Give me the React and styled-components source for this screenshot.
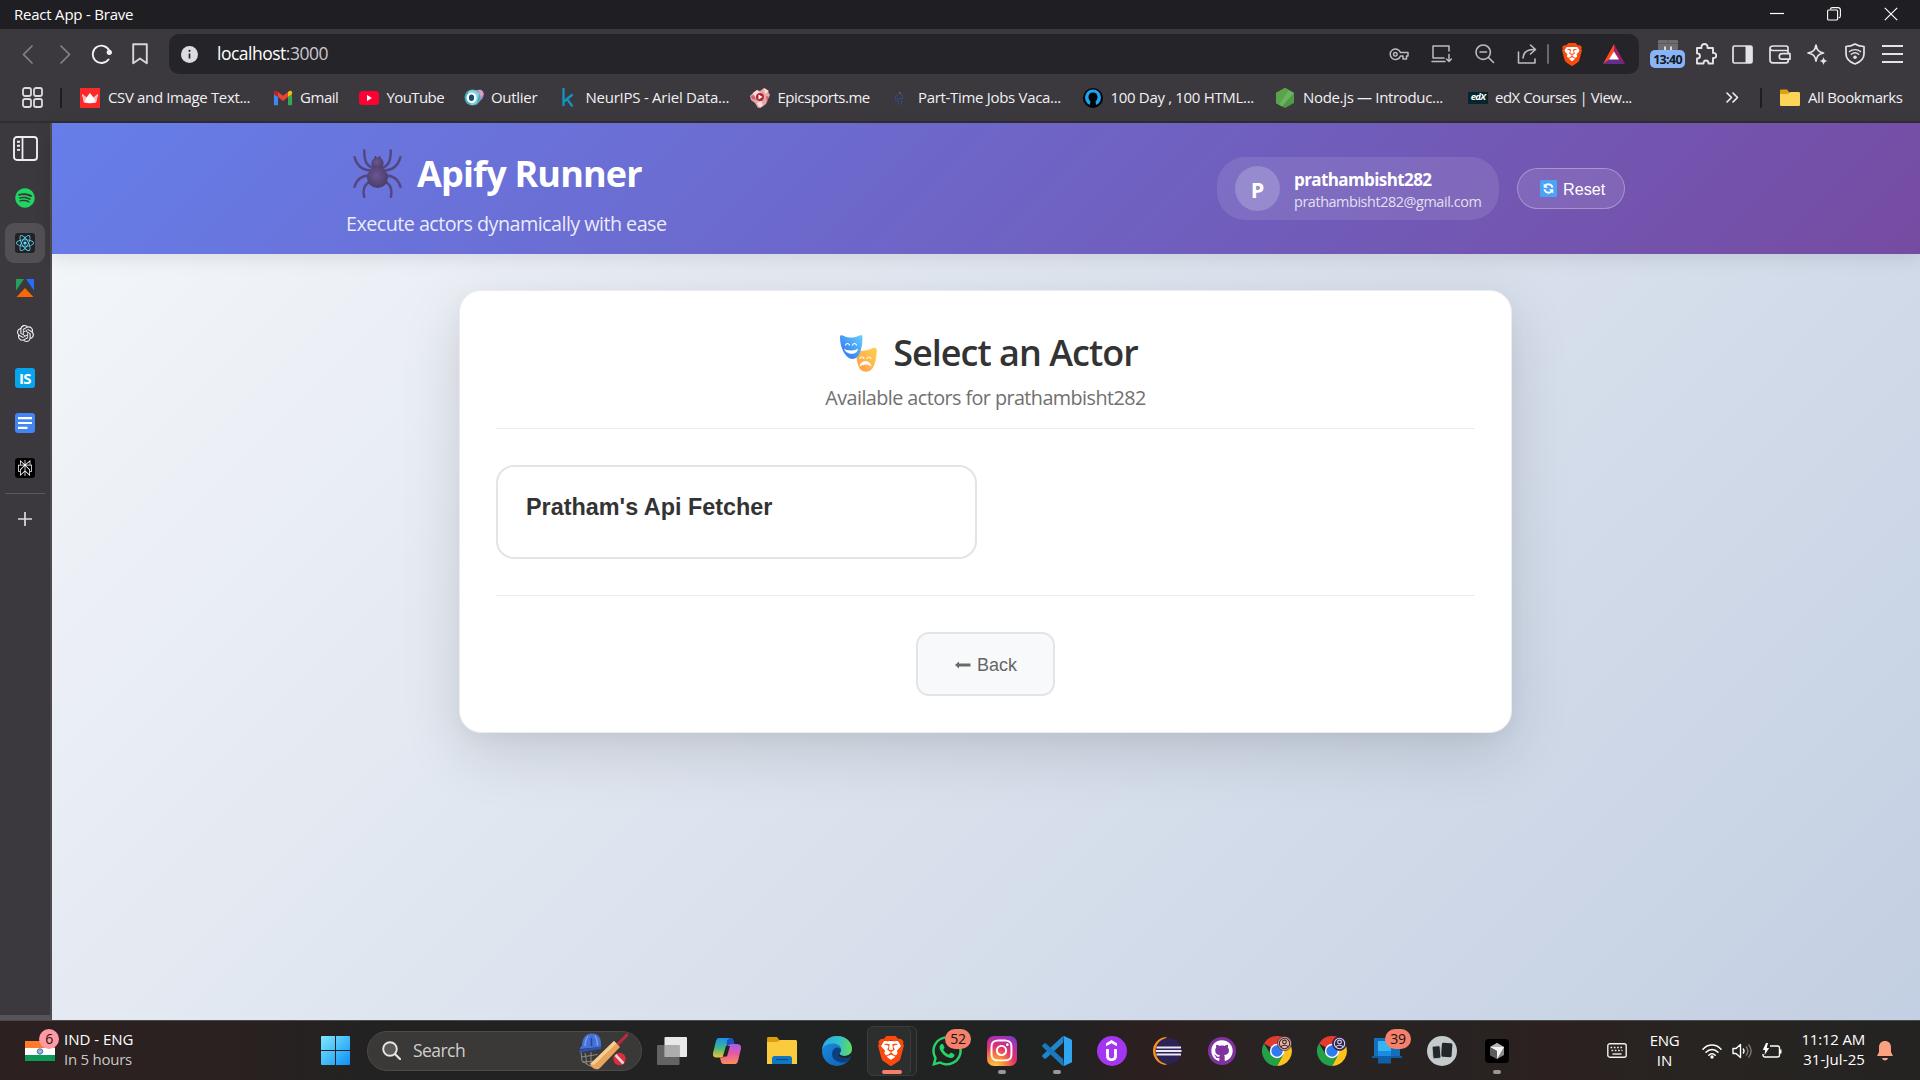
import React from "react";
import styled, { createGlobalStyle } from "styled-components";
import { SiBrave, SiOpenai, SiPerplexity, SiUdemy } from "react-icons/si";
import { FaSpotify, FaReact, FaWhatsapp, FaGithub, FaInstagram } from "react-icons/fa6";

const UI = `"Open Sans", "Noto Sans", sans-serif`;
const ARIAL = `"Liberation Sans", Arial, sans-serif`;

const Global = createGlobalStyle`
  *, *::before, *::after { box-sizing: border-box; }
  html, body { margin: 0; padding: 0; }
  body { font-family: ${UI}; overflow: hidden; background: #3b393e; }
  h1, h2, h3, p { margin: 0; }
  svg { display: block; flex: none; }
`;

/* ---------- shell ---------- */
const Screen = styled.div`
  width: 1920px;
  height: 1080px;
  display: flex;
  flex-direction: column;
  overflow: hidden;
`;
const Text = styled.span`
  font-size: ${(p) => p.$size || 15}px;
  letter-spacing: ${(p) => p.$track || 0}px;
  line-height: ${(p) => p.$line || 20}px;
  font-weight: ${(p) => p.$weight || 400};
  color: ${(p) => p.$color || "#fff"};
  white-space: nowrap;
`;
const TitleBar = styled.header`
  height: 29px;
  flex: none;
  background: #1f1e22;
  display: flex;
  align-items: center;
  justify-content: space-between;
  padding: 0 22px 1px 14px;
`;
const WindowButtons = styled.div`
  display: flex;
  gap: 43px;
  align-items: center;
`;
const Toolbar = styled.div`
  height: 51px;
  flex: none;
  background: #3b393e;
  display: flex;
  align-items: center;
  padding: 0 8px 1px 8px;
`;
const Cell = styled.div`
  width: ${(p) => p.$w || 37.3}px;
  height: 40px;
  flex: none;
  display: flex;
  align-items: center;
  justify-content: center;
  color: #d8d6dc;
`;
const AddressBar = styled.div`
  width: 1470px;
  height: 40px;
  margin-left: 4px;
  margin-right: 11px;
  padding: 0 6px 0 12px;
  border-radius: 10px;
  background: #252429;
  display: flex;
  align-items: center;
`;
const Url = styled.div`
  flex: 1;
  padding-left: 19px;
  padding-bottom: 2px;
`;
const BarDivider = styled.i`
  width: 2px;
  height: ${(p) => p.$h || 20}px;
  background: ${(p) => p.$color || "#6b696f"};
  border-radius: 1px;
  flex: none;
`;
const TimerExtension = styled.div`
  width: 35px;
  height: 28px;
  margin-right: 2px;
  flex: none;
  display: flex;
  flex-direction: column;
  align-items: center;
`;
const TimerBadge = styled.span`
  width: 35px;
  height: 18px;
  border-radius: 5px;
  background: #8ab4f8;
  color: #16181d;
  font-size: 12.5px;
  font-weight: 700;
  letter-spacing: -0.7px;
  line-height: 19px;
  text-align: center;
`;
const BookmarksBar = styled.nav`
  height: 43px;
  flex: none;
  background: #3b393e;
  border-bottom: 2px solid #302e32;
  display: flex;
  align-items: center;
  padding: 0 17px 6px 0;
`;
const AppsButton = styled.div`
  width: 60px;
  padding-left: 22px;
`;
const BookmarkList = styled.div`
  display: flex;
  margin-left: 18px;
  flex: 1;
`;
const Bookmark = styled.div`
  width: ${(p) => p.$w}px;
  flex: none;
  display: flex;
  align-items: center;
  gap: ${(p) => p.$gap || 8}px;
  & > ${Text} { padding-bottom: 2px; }
`;
const Body = styled.div`
  flex: 1;
  min-height: 0;
  display: flex;
`;

/* ---------- sidebar ---------- */
const Sidebar = styled.aside`
  width: 52px;
  flex: none;
  background: #3b393e;
  border-right: 2px solid #4d4b50;
  border-bottom: 5px solid #565459;
  display: flex;
  flex-direction: column;
  align-items: center;
  padding: 5px 0 0 0;
  gap: 5px;
`;
const SideItem = styled.div`
  width: 40px;
  height: 40px;
  flex: none;
  border-radius: 9px;
  background: ${(p) => (p.$active ? "#525055" : "transparent")};
  display: flex;
  align-items: center;
  justify-content: center;
  &:first-child { margin-bottom: 5px; }
`;
const SideTile = styled.div`
  width: 20px;
  height: 20px;
  border-radius: 3px;
  background: ${(p) => p.$bg};
  color: ${(p) => p.$fg || "#fff"};
  display: flex;
  align-items: center;
  justify-content: center;
  font-size: 15px;
  font-weight: 700;
  letter-spacing: -0.6px;
  line-height: 20px;
`;
const SideRule = styled.hr`
  width: 40px;
  height: 1px;
  margin: 0;
  border: 0;
  background: #5b595e;
`;

/* ---------- page ---------- */
const Page = styled.main`
  flex: 1;
  min-width: 0;
  display: flex;
  flex-direction: column;
  align-items: center;
  background: linear-gradient(135deg, #f5f7fa 0%, #c3cfe2 100%);
`;
const PageHeader = styled.header`
  width: 100%;
  height: 131px;
  flex: none;
  display: flex;
  justify-content: center;
  background: linear-gradient(135deg, #667eea 0%, #764ba2 100%);
  box-shadow: 0 4px 18px rgba(0, 0, 0, 0.1);
`;
const HeaderInner = styled.div`
  width: 1279px;
  margin-right: 1px;
  display: flex;
  align-items: center;
  justify-content: space-between;
`;
const Brand = styled.div`
  display: flex;
  flex-direction: column;
  gap: 5px;
  padding-top: 7px;
`;
const BrandTitle = styled.h1`
  display: flex;
  align-items: center;
  gap: 15px;
  padding-left: 7px;
  font-size: 36px;
  line-height: 59px;
  font-weight: 700;
  letter-spacing: -0.83px;
  color: #fff;
`;
const Tagline = styled.p`
  font-size: 19.8px;
  line-height: 32px;
  letter-spacing: -0.56px;
  color: rgba(255, 255, 255, 0.88);
`;
const Account = styled.div`
  display: flex;
  align-items: center;
  gap: 18px;
`;
const UserPill = styled.div`
  width: 282px;
  height: 63px;
  padding: 0 18px;
  border-radius: 28px;
  background: rgba(255, 255, 255, 0.1);
  display: flex;
  align-items: center;
  gap: 14px;
`;
const Avatar = styled.div`
  width: 45px;
  height: 45px;
  flex: none;
  border-radius: 50%;
  background: rgba(255, 255, 255, 0.2);
  color: #fff;
  font-size: 21.6px;
  font-weight: 700;
  line-height: 45px;
  padding-top: 1px;
  text-align: center;
`;
const UserText = styled.div`
  display: flex;
  flex-direction: column;
  padding-top: 3px;
`;
const ResetButton = styled.button`
  width: 108px;
  height: 41px;
  padding: 0 0 0 22px;
  border: 1px solid rgba(255, 255, 255, 0.3);
  border-radius: 21px;
  background: rgba(255, 255, 255, 0.1);
  color: #fff;
  font: 400 16.2px/20px ${ARIAL};
  display: flex;
  align-items: center;
  gap: 6px;
`;
const Card = styled.section`
  width: 1053px;
  height: 443px;
  margin: 36px 1px 0 0;
  padding: 35px 36px 35px 36px;
  background: #fff;
  border: 1px solid #ececee;
  border-radius: 22px;
  box-shadow: 0 20px 60px rgba(0, 0, 0, 0.13), 0 6px 18px rgba(0, 0, 0, 0.03);
  display: flex;
  flex-direction: column;
`;
const CardHead = styled.div`
  height: 103px;
  flex: none;
  border-bottom: 1px solid #ebecee;
  display: flex;
  flex-direction: column;
  align-items: center;
  padding-top: 1px;
`;
const CardTitle = styled.h2`
  display: flex;
  align-items: center;
  gap: 16px;
  padding-left: 7px;
  font-size: 36px;
  line-height: 52px;
  font-weight: 600;
  letter-spacing: -0.98px;
  color: #333;
`;
const CardSub = styled.p`
  margin-top: 3px;
  font-size: 19.8px;
  line-height: 32px;
  letter-spacing: -0.57px;
  color: #707070;
`;
const ActorGrid = styled.div`
  display: grid;
  grid-template-columns: 481px 481px;
  gap: 18px;
  padding: 36px 0;
  border-bottom: 1px solid #ebecee;
`;
const ActorCard = styled.button`
  height: 94px;
  padding: 0 27px 10px 28px;
  border: 2px solid #e1e5ea;
  border-radius: 18px;
  background: #fff;
  color: #333;
  font: 700 23.4px/30px ${ARIAL};
  text-align: left;
`;
const CardFoot = styled.div`
  display: flex;
  justify-content: center;
  padding-top: 36px;
`;
const BackButton = styled.button`
  width: 139px;
  height: 64px;
  padding: 2px 0 0 1px;
  border: 2px solid #e1e5ea;
  border-radius: 13px;
  background: #f8f9fb;
  color: #666;
  font: 400 18px/24px ${ARIAL};
  display: flex;
  align-items: center;
  justify-content: center;
  gap: 6px;
`;

/* ---------- taskbar ---------- */
const Taskbar = styled.footer`
  height: 60px;
  flex: none;
  border-top: 1px solid #4a4b4c;
  background: linear-gradient(90deg, #2c2120 0%, #2a2120 12%, #222222 20%, #212222 55%, #2c201f 60%, #282423 66%, #282322 76%, #2c2120 81%, #272421 88%, #252322 100%);
  display: flex;
  align-items: center;
`;
const Widget = styled.div`
  width: 307px;
  padding-left: 25px;
  display: flex;
  align-items: center;
  gap: 9px;
`;
const FlagWrap = styled.div`
  position: relative;
  width: 30px;
  height: 20px;
`;
const Lines = styled.div`
  display: flex;
  flex-direction: column;
  align-items: ${(p) => p.$align || "flex-start"};
  width: ${(p) => (p.$w ? p.$w + "px" : "auto")};
  padding-bottom: ${(p) => p.$lift || 4}px;
`;
const Badge = styled.span`
  position: absolute;
  top: ${(p) => p.$top}px;
  left: ${(p) => p.$left}px;
  width: ${(p) => p.$w}px;
  height: 20px;
  border-radius: 10px;
  background: ${(p) => p.$bg};
  color: #1b1412;
  font-size: 14px;
  line-height: 19px;
  letter-spacing: -0.3px;
  text-align: center;
`;
const StartButton = styled.div`
  width: 60px;
  padding-left: 14px;
`;
const SearchBox = styled.div`
  width: 275px;
  height: 40px;
  border-radius: 20px;
  border: 1px solid #4c4b4a;
  background: #3a3938;
  display: flex;
  align-items: center;
  padding: 0 13px 0 14px;
  gap: 12px;
  margin-right: 2px;
`;
const SearchLabel = styled.div`
  flex: 1;
`;
const TaskCell = styled.div`
  position: relative;
  width: 55px;
  height: 59px;
  flex: none;
  display: flex;
  align-items: center;
  justify-content: center;
`;
const ActiveFrame = styled.div`
  width: 50px;
  height: 50px;
  padding-right: 1px;
  border-radius: 6px;
  background: #2d2e2e;
  border: 1px solid #3a3b3b;
  box-shadow: inset -5px 0 0 #262727, inset -6px 0 0 #3a3b3b;
  display: flex;
  align-items: center;
  justify-content: center;
`;
const RunningMark = styled.i`
  position: absolute;
  bottom: 6px;
  left: 50%;
  width: ${(p) => (p.$active ? 20 : 8)}px;
  height: 4px;
  margin-left: ${(p) => (p.$active ? -10 : -4)}px;
  border-radius: 2px;
  background: ${(p) => (p.$active ? "#f4806a" : "#9a9797")};
`;
const Disc = styled.div`
  width: ${(p) => p.$s}px;
  height: ${(p) => p.$s}px;
  border-radius: ${(p) => p.$r || "50%"};
  background: ${(p) => p.$bg};
  color: #fff;
  display: flex;
  align-items: center;
  justify-content: center;
`;
const Tray = styled.div`
  margin-left: auto;
  display: flex;
  align-items: center;
  padding-right: 27px;
`;
const TrayIcons = styled.div`
  display: flex;
  gap: 10px;
  margin-right: 11px;
`;

/* ---------- drawings ---------- */
const Svg = ({ w, h = w, vb, children, ...rest }) => (
  <svg width={w} height={h} viewBox={vb || `0 0 ${w} ${h}`} fill="none" {...rest}>
    {children}
  </svg>
);
const line = { stroke: "currentColor", strokeWidth: 1.7, strokeLinecap: "round", strokeLinejoin: "round" };

const BraveLion = ({ w, h }) => (
  <Svg w={w} h={h} vb="1.7 0 20.6 24" preserveAspectRatio="none">
    <path d="M6 4h12l2 4-3 10-5 4-5-4L4 8z" fill="#fff" />
    <SiBrave size={24} color="#fb4a0b" x="0" y="0" />
  </Svg>
);

const Spider = () => (
  <Svg w={49} h={49} vb="0 0 48 48">
    <defs>
      <radialGradient id="spiderBody" cx=".45" cy=".4" r=".65">
        <stop offset="0" stopColor="#6a5790" />
        <stop offset="1" stopColor="#463a66" />
      </radialGradient>
    </defs>
    <g stroke="#544780" strokeWidth="2.4" strokeLinecap="round">
      <path d="M20 19C13 16 11 12 11 1.500" />
      <path d="M28 19c7-3 9-7 9-17.500" />
      <path d="M18 21C9 21 4 17 1.500 8" />
      <path d="M30 21c9 0 14-4 16.500-13" />
      <path d="M16 26C9 26 4 29 1.500 37" />
      <path d="M32 26c7 0 12 3 14.500 11" />
      <path d="M17 32c-5 2-8 6-6 15" />
      <path d="M31 32c5 2 8 6 6 15" />
    </g>
    <path d="M22 10V7M26 10V7" stroke="#43365f" strokeWidth="1.600" />
    <circle cx="24" cy="14" r="6" fill="url(#spiderBody)" />
    <circle cx="24" cy="28" r="10.300" fill="url(#spiderBody)" />
  </Svg>
);

const Masks = () => (
  <Svg w={37} h={37} vb="0 0 37 37">
    <defs>
      <linearGradient id="happy" x1="0" y1="1" x2="1" y2="0">
        <stop offset="0.3" stopColor="#3a86f5" />
        <stop offset="1" stopColor="#67d2fb" />
      </linearGradient>
      <linearGradient id="sad" x1="0" y1="1" x2="1" y2="0">
        <stop offset="0" stopColor="#ff9a4d" />
        <stop offset="1" stopColor="#ffd24c" />
      </linearGradient>
    </defs>
    <path d="M16 14c3 2 5 2 9 1.500 4-.4 6-1.500 8-2.500 2-.6 4 .2 3.800 2.500C36.300 24 35 30 32 34c-3 3.500-9 3.500-12 0-3-5-4-12-4-20z" fill="url(#sad)" />
    <path d="M0 1.500C0 0 2 0 4 1c4 2 10 2 14 0 2-1 4.500-1 4.500.8C22.500 10 21 17 18 21c-3 4-8 4-11.500 0C2 16 0 9 0 1.500z" fill="url(#happy)" />
    <path d="M4 13.500c2 2.500 12 2.500 14 0 0 7-12 7-14 0z" fill="#fff" />
    <path d="M5.500 10c1-2 3-2 4 0M12.500 10c1-2 3-2 4 0M20 23.500c1-2 3-2 4 0M27 23.500c1-2 3-2 4 0" stroke="#fff" strokeWidth="1.200" strokeLinecap="round" />
    <path d="M19.500 31.500c1-7 11-7 12 0-4-2.700-8-2.700-12 0z" fill="#fff" />
  </Svg>
);

const ResetGlyph = () => (
  <Svg w={17} h={17}>
    <rect width="17" height="17" rx="1.500" fill="#4ba3f7" />
    <path d="M12.500 7.600A4.200 4.200 0 0 0 5 6M4.500 9.400A4.200 4.200 0 0 0 12 11" stroke="#fff" strokeWidth="1.900" />
    <path d="M3.700 3.500v4.300H8zM13.300 13.500V9.200H9z" fill="#fff" />
  </Svg>
);

const GmailLogo = () => (
  <Svg w={20} h={16} vb="-1 0 22 16">
    <path d="M1 16h3.500V7L0 3.500V15a1 1 0 0 0 1 1z" fill="#4285f4" />
    <path d="M15.500 16H19a1 1 0 0 0 1-1V3.500L15.500 7z" fill="#34a853" />
    <path d="M15.500 7L20 3.500V2c0-2-2-2.600-3.400-1.500L15.500 1.400z" fill="#fbbc04" />
    <path d="M4.500 7V1.400L10 5.500l5.500-4.100V7L10 11.200z" fill="#ea4335" />
    <path d="M0 2v1.500L4.500 7V1.400L3.400.5C2-.6 0 0 0 2z" fill="#c5221f" />
  </Svg>
);

const Chrome = ({ ring, ink }) => (
  <Svg w={30} h={30} vb="-15 -15 30 30">
    <path d="M0 0L-13-7.500A15 15 0 0 1 13-7.500z" fill="#e33b2e" />
    <path d="M0-7.200H13.100A15 15 0 0 1 0 15L6.200 3.600z" fill="#fcc31f" />
    <path d="M-6.200 3.600L-13-7.500A15 15 0 0 0 0 15L6.200 3.600z" fill="#24a148" />
    <circle r="7.200" fill="#fff" />
    <circle r="5.700" fill="#2f7af0" />
    <circle cx="7.500" cy="-7.500" r="7" fill={ring} stroke="#2b2342" strokeWidth=".8" />
    <circle cx="7.500" cy="-7.500" r="5.200" stroke={ink} strokeWidth="1.100" />
    <circle cx="7.500" cy="-9" r="1.900" stroke={ink} strokeWidth="1.100" />
    <path d="M4-4.300c1.500-2 5.500-2 7 0" stroke={ink} strokeWidth="1.100" />
  </Svg>
);

const Edge = () => (
  <Svg w={30} h={30}>
    <defs>
      <linearGradient id="edgeTop" x1="0" y1=".4" x2="1" y2=".5">
        <stop offset="0" stopColor="#2aa7e6" />
        <stop offset=".55" stopColor="#35c1c9" />
        <stop offset="1" stopColor="#62dc56" />
      </linearGradient>
      <linearGradient id="edgeLow" x1="0" y1="0" x2=".8" y2="1">
        <stop offset="0" stopColor="#1d8fe0" />
        <stop offset="1" stopColor="#0f63b8" />
      </linearGradient>
    </defs>
    <circle cx="15" cy="15" r="15" fill="url(#edgeLow)" />
    <path d="M0 14C1 5 7 0 15 0c9 0 15 6 15 12.500 0 4.500-3.500 7.500-7.500 7.500-3.500 0-5-1.200-5-2.300 0-.8 1.700-1.500 1.700-4.200C19 10 15.500 7.500 11 7.500 5 7.500 1 10.500 0 14z" fill="url(#edgeTop)" />
    <path d="M10 18c0-3.500 2-5.500 4-6.500 3-.5 5 1 5 3 0 1.500-1.500 2-1.500 3.300 0 1.200 2 2.200 5 2.200 2.300 0 4-.7 5.500-1.700V23l-5 3.500C16 27 10 24 10 18z" fill="#0b3f80" />
    <path d="M17.500 17.600c0 1.400 2 2.600 5.200 2.600 3 0 5.600-1.600 7.300-4.200v4.500l-2.500.5c-3 1.600-9.500 1.300-11-2z" fill="#212222" />
  </Svg>
);

const Copilot = () => (
  <Svg w={28} h={26} vb="0 0 28 26">
    <defs>
      <linearGradient id="cpA" x1="0" y1="0" x2="0" y2="1">
        <stop offset="0" stopColor="#1f8df0" />
        <stop offset=".5" stopColor="#3db88a" />
        <stop offset="1" stopColor="#f2c12e" />
      </linearGradient>
      <linearGradient id="cpB" x1="0" y1="0" x2="0" y2="1">
        <stop offset="0" stopColor="#a35cf0" />
        <stop offset=".5" stopColor="#ea5aa0" />
        <stop offset="1" stopColor="#fb8f5a" />
      </linearGradient>
    </defs>
    <path d="M6 0h11c2 0 3 1 3.500 3l.8 3H17c-2 0-3 1-3.500 3l-2 7.500c-.5 2-1.500 3-3.500 3H3c-2.500 0-3.500-2-3-4.500L3 3C3.500 1 4.500 0 6 0z" fill="url(#cpA)" />
    <path d="M17 0c2 0 3 1 3.500 3l.8 3H17c-2 0-3 1-3.500 3L14 2z" fill="#1c50c8" />
    <path d="M22 26H11c-2 0-2.800-1-3.200-3L7 19.500h2c2 0 3-1 3.500-3l2-7.500c.5-2 1.500-3 3.500-3h6c3 0 4.500 2 4 4.500L25 23c-.5 2-1.500 3-3 3z" fill="url(#cpB)" />
    <path d="M13 8h4l-3 10.500H9.800z" fill="#222" />
  </Svg>
);

const VsCode = () => (
  <Svg w={30} h={30}>
    <path d="M22 0l-1 7L4 22.500c-.6.500-1.300.5-1.800 0L.6 21c-.6-.6-.6-1.400 0-2L20 .8z" fill="#2086cc" />
    <path d="M22 30l-1-7L4 7.500c-.6-.5-1.300-.5-1.800 0L.6 9c-.6.600-.6 1.400 0 2L20 29.200z" fill="#1a78c0" />
    <path d="M22 0l7 3.200c.6.300 1 .9 1 1.600v20.400c0 .7-.4 1.300-1 1.600L22 30V0z" fill="#30a6f2" />
  </Svg>
);

const Cricket = () => (
  <Svg w={50} h={38}>
    <path d="M3 20l1 9 8 5 8-1M3.500 25l16-2.500M7 21l2 11.500M13 20v14M4 30l16-1" stroke="#8d8b8a" strokeWidth="1" />
    <path d="M2 17c0-2 1-2 2-3C4 6 8 1.500 14 1.500c6 0 9 4 9 10.500v3z" fill="#4672d8" />
    <path d="M10 4c-2 3-3 6-3 10M17 3.500c2 3 2.500 6 2.500 10" stroke="#7ea2f2" strokeWidth="1.300" />
    <path d="M13.500 6v8" stroke="#2444a0" strokeWidth="1.500" />
    <path d="M1 18l22-3.500v2.500L1.500 20.500z" fill="#2c50b4" />
    <path d="M38 14l11-11" stroke="#c2293c" strokeWidth="3" strokeLinecap="round" />
    <path d="M36 9l6 6-20 21c-3 3-8 0-10-3z" fill="#e7a55e" />
    <path d="M36 9l2.500 2.500L16 33l-4-1z" fill="#f6cd92" />
    <circle cx="41.500" cy="27" r="6.200" fill="#d8303f" />
    <path d="M37.500 23l8 8.500" stroke="#f4d3d3" strokeWidth="2.600" />
  </Svg>
);

const Extras = {
  csv: (
    <Svg w={20} h={20}>
      <rect width="20" height="20" fill="#fb2929" />
      <path d="M2 6l4.500 3.500L10 5l3.500 4.500L18 6l-2 8.500c-4 1-8 1-12 0z" fill="#fff" />
      <path d="M2 6l4.500 3.500L4 14.500zM18 6l-4.500 3.500 2.500 5z" fill="#ffb9b5" />
    </Svg>
  ),
  youtube: (
    <Svg w={20} h={14}>
      <rect width="20" height="14" rx="3.500" fill="#ff0033" />
      <path d="M8 4v6l5-3z" fill="#fff" />
    </Svg>
  ),
  outlier: (
    <Svg w={20} h={17}>
      <path d="M11 1h6c3 2 3.500 6 1 9l-6 6z" fill="#9d8fd0" />
      <path d="M14 1c3-1 6 1 5.500 5L16 8z" fill="#d79bc4" />
      <circle cx="8.500" cy="8.500" r="8" fill="#48aeb9" />
      <path d="M4 3c3-3 9-2 11 2l-2 8c-1 2-4 3.500-6 3z" fill="#8bd3dc" />
      <ellipse cx="7.500" cy="8.700" rx="5" ry="5.300" fill="#fff" />
      <ellipse cx="7.500" cy="8.700" rx="2.600" ry="3.200" fill="#174f6b" />
    </Svg>
  ),
  kaggle: (
    <Svg w={12} h={19}>
      <path d="M1.500 0v18M10.500 6.500L2 13.500M5 11l5.500 7.500" stroke="#1593bf" strokeWidth="2.300" />
    </Svg>
  ),
  epic: (
    <Svg w={20} h={20}>
      <path d="M3 5l4-3 3 1 4-3 3 2 3 5-2 4-2 5-4 3-4 1-3-5-4-3-1-4z" fill="#e8a7a9" />
      <path d="M3 5l4-3 3 3-5 4zM14 0l5 3-4 3zM7 15l4-2 2 4-3 3z" fill="#f7dedb" />
      <path d="M1 8l3-1 2 5-4-1zM16 8l3 1-2 5z" fill="#cf5f6c" />
      <circle cx="10" cy="9" r="4" fill="#b02635" />
      <path d="M8.500 6.500v5L12.500 9z" fill="#fff" />
    </Svg>
  ),
  jobs: (
    <Svg w={11} h={14} vb="-1 -1 13 17">
      <path d="M3 4C0 5 0 9 2 11M3 8h7M7 3.500h2V8M4 10v5M8 10v5" stroke="#2b4c8f" strokeWidth="1.300" />
      <circle cx="6" cy="1.500" r="1.500" fill="#7a5242" />
    </Svg>
  ),
  hundred: (
    <Svg w={20} h={20}>
      <circle cx="10" cy="10" r="10" fill="#050505" />
      <circle cx="10" cy="9.500" r="8" fill="#19a6f5" />
      <path d="M10 4.500c3 0 4.500 2 4.500 4.500 0 2-1 3.500-2 4.500l1 5c-2 1.500-5 1.500-7 0l1-5c-1-1-2-2.500-2-4.500 0-2.500 1.500-4.500 4.500-4.500z" fill="#050505" />
    </Svg>
  ),
  node: (
    <Svg w={18} h={20}>
      <path d="M9 0l9 5v10l-9 5-9-5V5z" fill="#4f9a45" />
      <path d="M9 0l9 5-12 13.500L0 15V5z" fill="#6bb35e" />
      <path d="M9 0l4 2L3 16.500 0 15V5z" fill="#58a34c" />
    </Svg>
  ),
};

const EdxTile = styled.span`
  width: 20px;
  height: 12px;
  background: #06262c;
  color: #fff;
  font: italic 700 9.5px/10px ${UI};
  letter-spacing: -0.7px;
  text-align: center;
`;

const bookmarks = [
  { w: 193, icon: Extras.csv, label: "CSV and Image Text...", track: -0.36 },
  { w: 86, icon: <GmailLogo />, label: "Gmail", track: -0.45, gap: 7 },
  { w: 105, icon: Extras.youtube, label: "YouTube", track: -0.6, gap: 7.5 },
  { w: 98, icon: Extras.outlier, label: "Outlier", track: -0.3, gap: 7 },
  { w: 188, icon: Extras.kaggle, label: "NeurIPS - Ariel Data...", track: -0.25, gap: 11.5 },
  { w: 144, icon: Extras.epic, label: "Epicsports.me", track: -0.5, gap: 7.5 },
  { w: 189, icon: Extras.jobs, label: "Part-Time Jobs Vaca...", track: -0.31, gap: 13 },
  { w: 193, icon: Extras.hundred, label: "100 Day , 100 HTML...", track: -0.32, gap: 7.5 },
  { w: 192, icon: Extras.node, label: "Node.js — Introduc...", track: -0.33, gap: 9 },
  { w: 200, icon: <EdxTile>edX</EdxTile>, label: "edX Courses | View...", track: -0.5, gap: 7 },
];

const taskItems = [
  {
    key: "taskview",
    icon: (
      <Svg w={30} h={28}>
        <rect x="7.500" width="22.500" height="20" rx="1" fill="#e9e9e9" />
        <rect y="8" width="22.500" height="20" rx="1" fill="#6f6f6f" fillOpacity=".85" />
        <rect x="7.500" y="8" width="15" height="12" fill="#adadad" />
      </Svg>
    ),
  },
  { key: "copilot", icon: <Copilot /> },
  {
    key: "files",
    icon: (
      <Svg w={30} h={27}>
        <path d="M0 1.500C0 .7.600 0 1.500 0H10l3 4v5H0z" fill="#dd9c0b" />
        <path d="M0 5h10l3-2h15.500c.8 0 1.500.700 1.500 1.500V27H0z" fill="#fbcb3e" />
        <path d="M5 27v-5.500C5 20 6 19 7.500 19h15c1.500 0 2.500 1 2.500 2.500V27z" fill="#1077c4" />
        <path d="M9 22.500h12" stroke="#0a4c86" strokeWidth="1.200" />
      </Svg>
    ),
  },
  { key: "edge", icon: <Edge /> },
  { key: "brave", icon: <BraveLion w={26} h={30} />, active: true },
  { key: "whatsapp", icon: <FaWhatsapp size={34} color="#25d366" />, badge: "52" },
  {
    key: "instagram",
    icon: (
      <Disc $s={30} $r="7px" $bg="radial-gradient(circle at 25% 105%, #fdd24b 0%, #fb8a35 28%, #e0306f 55%, #b52fa8 75%, #6a3fd0 100%)">
        <FaInstagram size={25} />
      </Disc>
    ),
    running: true,
  },
  { key: "vscode", icon: <VsCode />, running: true },
  {
    key: "udemy",
    icon: (
      <Disc $s={30} $bg="#a435f0">
        <SiUdemy size={21} />
      </Disc>
    ),
  },
  {
    key: "eclipse",
    icon: (
      <Svg w={30} h={28}>
        <path d="M15 0A14 14 0 0 0 15 28 18 18 0 0 1 15 0z" fill="#f7941e" />
        <circle cx="16.500" cy="14" r="13" fill="#2c2255" />
        <path d="M4.500 10.500h24.500M4 14h25.500M4.500 17.500h24.500" stroke="#e9e7f2" strokeWidth="2.200" />
      </Svg>
    ),
  },
  {
    key: "github",
    icon: (
      <Disc $s={28} $bg="#8032a0">
        <FaGithub size={22} />
      </Disc>
    ),
  },
  { key: "chrome1", icon: <Chrome ring="#e9b3a6" ink="#3b2a2a" /> },
  { key: "chrome2", icon: <Chrome ring="#2e2547" ink="#d9cfee" /> },
  {
    key: "phone",
    icon: (
      <Svg w={30} h={27}>
        <path d="M2 1h26v18H2z" fill="#1470bd" />
        <path d="M0 19h30v2H0z" fill="#0f5c9e" />
        <path d="M6 4h13v17H6z" fill="#35b5f2" />
        <path d="M6 14h13v5H6z" fill="#1d8ce0" />
        <path d="M6 19h13v7.500H6z" fill="#0f5fa8" />
      </Svg>
    ),
    badge: "39",
  },
  {
    key: "devices",
    icon: (
      <Svg w={30} h={30}>
        <circle cx="15" cy="15" r="15" fill="#c5cacd" />
        <rect x="14.500" y="7" width="10.500" height="14" rx="1.500" transform="rotate(4 20 14)" fill="#24272a" />
        <rect x="5.500" y="10" width="8" height="12.500" rx="1.500" transform="rotate(-5 9 16)" fill="#24272a" stroke="#c5cacd" strokeWidth=".8" />
      </Svg>
    ),
  },
  {
    key: "cursor",
    icon: (
      <Svg w={24} h={24}>
        <rect width="24" height="24" rx="4" fill="#000" />
        <path d="M12 4l7 4v8l-7 4-7-4V8z" fill="#8b8b8b" />
        <path d="M5 8h14l-7 12v-8z" fill="#f2f2f2" />
        <path d="M5 8l7 4v8l-7-4z" fill="#5c5c5c" />
        <path d="M5 8l7-4 7 4z" fill="#b5b5b5" />
      </Svg>
    ),
    running: true,
  },
];

function BrowserChrome() {
  return (
    <>
      <TitleBar>
        <Text $size={15} $track={-0.22}>React App - Brave</Text>
        <WindowButtons>
          <Svg w={14} h={14}><path d="M0 6.500h14" stroke="#fff" strokeWidth="1.200" /></Svg>
          <Svg w={14} h={14}>
            <rect x=".6" y="3" width="10" height="10" rx="1" stroke="#fff" strokeWidth="1.100" />
            <path d="M3.500 2.500C3.500 1 4 .6 5.500.6H11c1.700 0 2.400.7 2.400 2.400V9c0 1.300-.6 1.900-1.900 1.900" stroke="#fff" strokeWidth="1.100" />
          </Svg>
          <Svg w={14} h={14}><path d="M.8.800l12.400 12.400M13.200.8L.8 13.200" stroke="#fff" strokeWidth="1.200" /></Svg>
        </WindowButtons>
      </TitleBar>
      <Toolbar>
        <Cell $w={38}><Svg w={11} h={19} color="#85838a"><path {...line} d="M10 1L1.500 9.500 10 18" /></Svg></Cell>
        <Cell $w={38}><Svg w={11} h={19} color="#85838a"><path {...line} d="M1 1l8.500 8.500L1 18" /></Svg></Cell>
        <Cell $w={36}>
          <Svg w={22} h={21} color="#f1f0f3">
            <path {...line} strokeWidth="1.900" d="M17.500 15.500A8.700 8.700 0 1 1 18.500 7" />
            <circle cx="18.300" cy="8.300" r="2.600" fill="currentColor" />
          </Svg>
        </Cell>
        <Cell $w={40}><Svg w={16} h={22} color="#d8d6dc"><path {...line} strokeWidth="1.900" d="M1.200 1.200h13.600v19L8 15.500l-6.800 4.700z" /></Svg></Cell>
        <Cell $w={5} />
        <AddressBar>
          <Svg w={17} h={17}>
            <circle cx="8.500" cy="8.500" r="8.500" fill="#dddbe1" />
            <path d="M8.500 7.500v5" stroke="#252429" strokeWidth="1.700" />
            <circle cx="8.500" cy="4.800" r="1.100" fill="#252429" />
          </Svg>
          <Url>
            <Text $size={17.5} $track={-0.5} $line={24}>localhost</Text>
            <Text $size={17.5} $track={-0.5} $line={24} $color="#c9c7cd">:3000</Text>
          </Url>
          <Cell $w={42}>
            <Svg w={20} h={13} color="#bdbbc1">
              <path {...line} strokeWidth="1.500" d="M11.500 4.500H19v3.500h-1.500v3H14V8h-2.500A5.300 5.300 0 1 1 11.500 4.500z" />
              <circle cx="6.300" cy="6.300" r="1.800" stroke="currentColor" strokeWidth="1.400" />
            </Svg>
          </Cell>
          <Cell $w={43}>
            <Svg w={21} h={18} color="#bdbbc1">
              <path {...line} strokeWidth="1.500" d="M18 6V1H2v12h11M1 16.500h13M18 9.500v7M15.500 14l2.500 2.500 2.500-2.500" />
            </Svg>
          </Cell>
          <Cell $w={43}>
            <Svg w={20} h={20} color="#bdbbc1">
              <path {...line} strokeWidth="1.600" d="M13.500 13.500L18.500 18.500M5 8h6.500" />
              <circle cx="8.200" cy="8.200" r="7.200" stroke="currentColor" strokeWidth="1.600" />
            </Svg>
          </Cell>
          <Cell $w={41}>
            <Svg w={20} h={20} color="#bdbbc1">
              <path {...line} strokeWidth="1.600" d="M1.500 8v11h16.500v-4M13.500 1l5 4.500-5 4.500M18 5.500C10 5 6.500 9 6 14" />
            </Svg>
          </Cell>
          <BarDivider $h={20} />
          <Cell $w={46}><BraveLion w={20} h={23} /></Cell>
          <Cell $w={38}>
            <Svg w={22} h={20}>
              <path d="M11 0L0 20l11-7.500z" fill="#ff4a25" />
              <path d="M11 0l11 20-11-7.500z" fill="#9e1f63" />
              <path d="M0 20h22l-11-7.500z" fill="#662d91" />
              <path d="M11 7.500l5 8H6z" fill="#fff" />
            </Svg>
          </Cell>
        </AddressBar>
        <TimerExtension>
          <Svg w={20} h={10}>
            <rect width="20" height="10" rx="1" fill="#6d6d6f" />
            <path d="M7 10V6.500M13 10V6.500" stroke="#fff" strokeWidth="1.500" />
            <path d="M10 0v3M0 3.500h20" stroke="#5a5a5c" />
          </Svg>
          <TimerBadge>13:40</TimerBadge>
        </TimerExtension>
        <Cell>
          <Svg w={22} h={22} color="#e4e3e7">
            <path {...line} strokeWidth="1.900" d="M2 5h4.500C6 2.500 7.500 1 9.500 1S13 2.500 12.500 5H18v5c2-.5 3.200.8 3.200 2.500S20 15.500 18 15v5.500h-4.500c0-2-1-3-2.500-3s-2.500 1-2.500 3H2v-5c2 0 3-1 3-2.600S4 10.400 2 10.400z" />
          </Svg>
        </Cell>
        <Cell>
          <Svg w={21} h={19} color="#e4e3e7">
            <rect x="1" y="1" width="19" height="17" rx="1.500" stroke="currentColor" strokeWidth="1.700" />
            <path d="M13.500 1H20v17h-6.500z" fill="currentColor" />
          </Svg>
        </Cell>
        <Cell>
          <Svg w={22} h={19} color="#e4e3e7">
            <path {...line} strokeWidth="1.700" d="M19 5.500V3c0-1.200-.7-2-2-2H4C2.200 1 1 2 1 3.300V15c0 1.700 1 2.800 2.800 2.800H17c1.500 0 2.300-.8 2.300-2.300V14M1 3.300c0 1.400 1 2.200 2.800 2.200H17c1.500 0 2.300.7 2.300 2.200v1M13 8.700h8v5.500h-8a2.700 2.700 0 0 1 0-5.500z" />
          </Svg>
        </Cell>
        <Cell>
          <Svg w={21} h={21} color="#e4e3e7">
            <path {...line} strokeWidth="1.700" d="M9 1c.8 5 2.500 7 7.500 8-5 1-6.700 3-7.500 8-.8-5-2.500-7-8-8C6.500 8 8.200 6 9 1z" />
            <path d="M16.500 13c.5 2.500 1.500 3.500 4 4-2.500.5-3.500 1.500-4 4-.5-2.500-1.500-3.500-4-4 2.500-.5 3.500-1.500 4-4z" fill="currentColor" />
          </Svg>
        </Cell>
        <Cell>
          <Svg w={20} h={22} color="#e4e3e7">
            <path {...line} strokeWidth="1.700" d="M10 1c3 1.800 5.500 2.500 9 2.500V11c0 5-3.500 8-9 10-5.500-2-9-5-9-10V3.500C4.500 3.500 7 2.800 10 1z" />
            <path {...line} strokeWidth="1.400" d="M4.500 8.500c3-2.500 8-2.500 11 0M6.300 11.300c2.200-1.800 5.200-1.800 7.400 0" />
            <circle cx="10" cy="14.200" r="1.800" fill="currentColor" />
          </Svg>
        </Cell>
        <Cell><Svg w={21} h={18} color="#e4e3e7"><path stroke="currentColor" strokeWidth="1.800" d="M0 1h21M0 9h21M0 17h21" /></Svg></Cell>
      </Toolbar>
      <BookmarksBar>
        <AppsButton>
          <Svg w={21} h={21} color="#dcdbe0">
            {[[1, 1], [12, 1], [1, 12], [12, 12]].map(([x, y]) => (
              <rect key={`${x}${y}`} x={x} y={y} width="8" height="8" rx="2" stroke="currentColor" strokeWidth="1.800" />
            ))}
          </Svg>
        </AppsButton>
        <BarDivider $color="#1d1c20" />
        <BookmarkList>
          {bookmarks.map((b) => (
            <Bookmark key={b.label} $w={b.w} $gap={b.gap}>
              {b.icon}
              <Text $track={b.track} $color="#f1f0f3">{b.label}</Text>
            </Bookmark>
          ))}
        </BookmarkList>
        <Cell $w={56}>
          <Svg w={13} h={11} color="#f1f0f3"><path {...line} strokeWidth="1.600" d="M1 1l4.500 4.500L1 10M7 1l4.500 4.500L7 10" /></Svg>
        </Cell>
        <BarDivider $color="#1d1c20" />
        <Bookmark $w={141}>
          <Svg w={38} h={17}>
            <path d="M18 2c0-1 .5-1.500 1.500-1.500h5.500L27 3v5h-9z" fill="#e0a013" />
            <path d="M18 5h8l2-2h8.500c1 0 1.500.5 1.500 1.500v11c0 1-.5 1.500-1.500 1.500h-17c-1 0-1.500-.5-1.500-1.500z" fill="#fdd35a" />
          </Svg>
          <Text $track={-0.42} $color="#f1f0f3">All Bookmarks</Text>
        </Bookmark>
      </BookmarksBar>
    </>
  );
}

function SideRail() {
  return (
    <Sidebar>
      <SideItem>
        <Svg w={25} h={25} color="#eeedf0">
          <rect x="1" y="1" width="23" height="23" rx="3" stroke="currentColor" strokeWidth="1.900" />
          <path d="M9.500 1v23" stroke="currentColor" strokeWidth="1.800" />
          <path d="M4 5.700h3M4 9.800h3M4 13.900h3" stroke="currentColor" strokeWidth="1.900" />
        </Svg>
      </SideItem>
      <SideItem><FaSpotify size={20} color="#1ed760" /></SideItem>
      <SideItem $active>
        <SideTile $bg="#222226" $fg="#61dafb"><FaReact size={18} /></SideTile>
      </SideItem>
      <SideItem>
        <Svg w={18} h={18}>
          <path d="M0 0h8L0 11.500z" fill="#24a158" />
          <path d="M18 0h-8l8 11.500z" fill="#246dff" />
          <path d="M9 9l8.500 9h-17z" fill="#f86606" />
        </Svg>
      </SideItem>
      <SideItem><SiOpenai size={17} color="#f2f1f4" /></SideItem>
      <SideItem><SideTile $bg="#06a5ee">IS</SideTile></SideItem>
      <SideItem>
        <SideTile $bg="#4285f4">
          <Svg w={14} h={12}><path d="M0 1.200h14M0 6h14M0 10.800h9.500" stroke="#fff" strokeWidth="2.200" /></Svg>
        </SideTile>
      </SideItem>
      <SideItem><SideTile $bg="#000"><SiPerplexity size={16} /></SideTile></SideItem>
      <SideRule />
      <SideItem>
        <Svg w={14} h={14} color="#dcdbdf"><path d="M7 0v14M0 7h14" stroke="currentColor" strokeWidth="1.700" /></Svg>
      </SideItem>
    </Sidebar>
  );
}

function RunnerPage() {
  return (
    <Page>
      <PageHeader>
        <HeaderInner>
          <Brand>
            <BrandTitle><Spider />Apify Runner</BrandTitle>
            <Tagline>Execute actors dynamically with ease</Tagline>
          </Brand>
          <Account>
            <UserPill>
              <Avatar>P</Avatar>
              <UserText>
                <Text $size={17} $weight={700} $track={-0.6} $line={22}>prathambisht282</Text>
                <Text $size={14.4} $track={-0.42} $line={21} $color="rgba(255,255,255,.8)">prathambisht282@gmail.com</Text>
              </UserText>
            </UserPill>
            <ResetButton><ResetGlyph />Reset</ResetButton>
          </Account>
        </HeaderInner>
      </PageHeader>
      <Card>
        <CardHead>
          <CardTitle><Masks />Select an Actor</CardTitle>
          <CardSub>Available actors for prathambisht282</CardSub>
        </CardHead>
        <ActorGrid>
          <ActorCard>Pratham's Api Fetcher</ActorCard>
        </ActorGrid>
        <CardFoot>
          <BackButton>
            <Svg w={16} h={8}><path d="M0 4l4-3.500v2h11.500v3H4v2z" fill="#6a6a64" /></Svg>
            Back
          </BackButton>
        </CardFoot>
      </Card>
    </Page>
  );
}

function WindowsTaskbar() {
  return (
    <Taskbar>
      <Widget>
        <FlagWrap>
          <Svg w={30} h={20}>
            <path d="M0 0h30v7H0z" fill="#ff7a2b" />
            <path d="M0 7h30v7H0z" fill="#fff" />
            <path d="M0 14h30v6H0z" fill="#0d9a57" />
            <circle cx="15" cy="10.500" r="2.700" fill="#9bb9d6" stroke="#3b6ea5" />
          </Svg>
          <Badge $top={-12} $left={14} $w={20} $bg="#ff99a4">6</Badge>
        </FlagWrap>
        <Lines>
          <Text $size={15}>IND - ENG</Text>
          <Text $size={15} $track={-0.25} $color="#c9c6c5">In 5 hours</Text>
        </Lines>
      </Widget>
      <StartButton>
        <Svg w={29} h={29}>
          <defs>
            <linearGradient id="win" x1="0" y1="0" x2="1" y2="1">
              <stop offset="0" stopColor="#7fe9fd" />
              <stop offset="1" stopColor="#0d8ff5" />
            </linearGradient>
          </defs>
          <path d="M0 1a1 1 0 0 1 1-1h13v14H0zM15 0h13a1 1 0 0 1 1 1v13H15zM0 15h14v14H1a1 1 0 0 1-1-1zM15 15h14v13a1 1 0 0 1-1 1H15z" fill="url(#win)" />
        </Svg>
      </StartButton>
      <SearchBox>
        <Svg w={19} h={19} color="#e8e6e5">
          <circle cx="8" cy="8" r="6.800" stroke="currentColor" strokeWidth="1.900" fill="#5a5958" />
          <path d="M13 13l5 5" stroke="currentColor" strokeWidth="2.200" strokeLinecap="round" />
        </Svg>
        <SearchLabel><Text $size={17.5} $track={-0.55} $color="#d0cecd">Search</Text></SearchLabel>
        <Cricket />
      </SearchBox>
      {taskItems.map((t) => (
        <TaskCell key={t.key}>
          {t.active ? <ActiveFrame>{t.icon}</ActiveFrame> : t.icon}
          {t.badge && <Badge $top={8} $left={26} $w={26} $bg="#f5806b">{t.badge}</Badge>}
          {(t.active || t.running) && <RunningMark $active={t.active} />}
        </TaskCell>
      ))}
      <Tray>
        <Svg w={20} h={15} color="#f2f0ef">
          <rect x=".8" y=".8" width="18.400" height="13.400" rx="2" stroke="currentColor" strokeWidth="1.400" />
          <path d="M3.500 4.500h13M4.500 7.500h11" stroke="currentColor" strokeWidth="1.500" strokeDasharray="1.700 1.600" />
          <path d="M5.500 11h9" stroke="currentColor" strokeWidth="1.400" />
        </Svg>
        <Lines $align="center" $w={75} $lift={2}>
          <Text $track={-0.3}>ENG</Text>
          <Text>IN</Text>
        </Lines>
        <TrayIcons>
          <Svg w={20} h={16} color="#fff">
            <path d="M1 6.200c5-5.600 13-5.600 18 0M4 9.300c3.400-3.700 8.600-3.700 12 0M6.800 12.200c1.900-2 4.500-2 6.400 0" stroke="currentColor" strokeWidth="1.500" strokeLinecap="round" />
            <circle cx="10" cy="14" r="1.700" fill="currentColor" />
          </Svg>
          <Svg w={20} h={16} color="#fff">
            <path d="M1 5.500h3L8.500 1.500v13L4 10.500H1z" stroke="currentColor" strokeWidth="1.400" strokeLinejoin="round" />
            <path d="M11 5.500c1.300 1.500 1.300 3.500 0 5" stroke="currentColor" strokeWidth="1.300" />
            <path d="M14 3.500c2.300 2.700 2.300 6.300 0 9M16.500 1.500c3.300 4 3.300 9 0 13" stroke="#7d7a79" strokeWidth="1.300" />
          </Svg>
          <Svg w={20} h={16} color="#fff">
            <path d="M8 3h7.500c1 0 2 .8 2 2v7c0 1.200-1 2-2 2H3c-1.200 0-2-.8-2-2v-1" stroke="currentColor" strokeWidth="1.400" />
            <path d="M18.500 6.500v4" stroke="currentColor" strokeWidth="2" />
            <path d="M4 0L.8 7h2.400L2.500 12l4.700-7H4.700L6 0z" fill="currentColor" />
          </Svg>
        </TrayIcons>
        <Lines $align="flex-end" $w={72}>
          <Text $track={-0.2}>11:12 AM</Text>
          <Text $track={0.1}>31-Jul-25</Text>
        </Lines>
        <Svg w={28} h={20}>
          <path d="M20 0c3.700 0 6 2.700 6 6.300V11l2 4H12l2-4V6.300C14 2.700 16.300 0 20 0z" fill="#fba080" />
          <path d="M17 17h6c-.3 1.600-1.400 2.400-3 2.400s-2.700-.8-3-2.400z" fill="#fba080" />
        </Svg>
      </Tray>
    </Taskbar>
  );
}

export default function App() {
  return (
    <Screen>
      <Global />
      <BrowserChrome />
      <Body>
        <SideRail />
        <RunnerPage />
      </Body>
      <WindowsTaskbar />
    </Screen>
  );
}
